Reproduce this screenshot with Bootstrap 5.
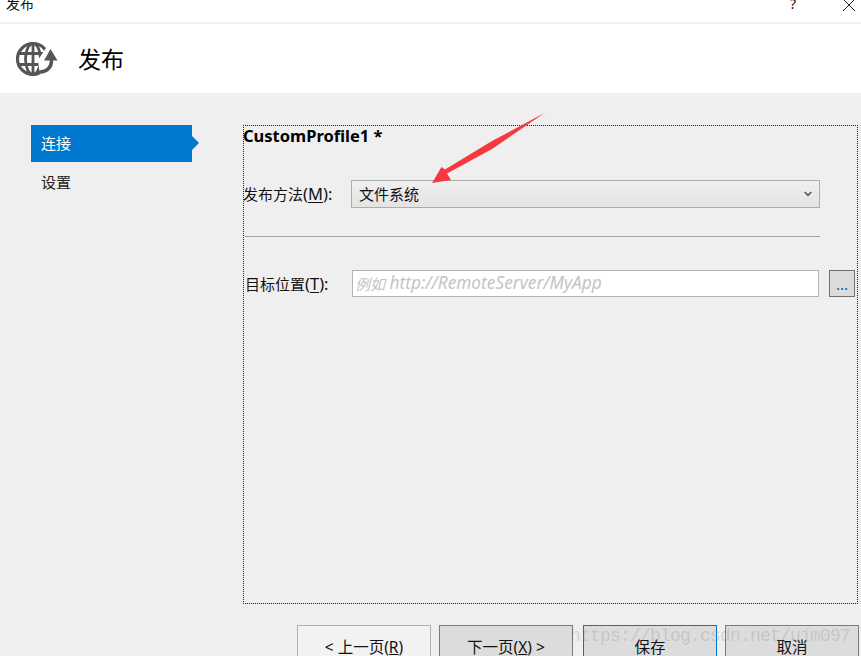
<!DOCTYPE html>
<html lang="zh-CN">
<head>
<meta charset="utf-8">
<title>发布</title>
<link href="https://cdn.jsdelivr.net/npm/bootstrap@5.3.0/dist/css/bootstrap.min.css" rel="stylesheet">
<style>
html,body{margin:0;height:656px;overflow:hidden;background:#efefef}
body{font-family:"Noto Sans","Noto Sans CJK SC",sans-serif;font-size:15px;color:#111;line-height:1.2}
.app-shell{position:relative;width:861px;height:656px;overflow:hidden}
.app-shell>*{flex:none}
.title-strip{height:22px;background:#fff;overflow:hidden}
.title-strip .cap{margin:-6px 0 0 6px;font-size:14px;line-height:20px}
.win-glyphs{padding-right:5px;gap:46px;margin-top:-6px}
.strip-gap{height:2px;background:#efefef}
.head-band{height:69px;background:#fff;padding-left:15px;gap:19px}
.head-band h1{font-size:23px;font-weight:400;margin:0;padding-top:2px;color:#000;line-height:1}
.main-row{padding:32px 4px 0 31px;height:505px}
.side-col{width:161px;flex:none}
.side-item{height:37px;padding:0 0 2px 10px;display:flex;align-items:center;position:relative;color:#222}
.side-item.on{background:#0078ce;color:#fff}
.side-item.on::after{content:"";position:absolute;left:100%;top:11px;border-left:7px solid #0078ce;border-top:7px solid transparent;border-bottom:7px solid transparent}
.side-item+.side-item{margin-top:2px}
.form-frame{margin-left:51px;width:615px;height:479px;border:1px dotted #222;flex:none}
.prof-name{font-weight:700;font-size:16.5px;line-height:20px;color:#000;margin-left:-1px}
.f-row{display:flex;align-items:center}
.f-label{white-space:nowrap}
.f-label u{text-underline-offset:2px}
.lat-part{font-size:16.5px}
.row-method{height:28px;margin:34px 0 0 -1px}
.row-method .f-label{width:108px}
.fake-select{width:469px;height:28px;border:1px solid #adadad;background:linear-gradient(#f0f0f0,#e3e3e3);padding:0 7px;justify-content:space-between;display:flex;align-items:center}
.rule-line{height:1px;background:#a0a0a0;width:575px;margin:28px 0 0 1px}
.row-target{height:27px;margin-top:33px;padding-left:1px}
.row-target .f-label{width:107px}
.fake-input{width:467px;height:27px;border:1px solid #b4b4b4;background:#fff;padding:0 2px;color:#c4c4c4;font-style:italic;font-size:17.3px;display:flex;align-items:center;white-space:pre}
.ph-cjk{font-size:15px}
.dots-btn{width:26px;height:27px;border:1px solid #707070;background:#dcdcdc;margin-left:10px;color:#0a58a8;font-size:15px;line-height:20px;text-align:center;padding:0}
.foot-row{padding:27px 0 0 297px;gap:8px}
.foot-row .act{width:134px;height:40px;background:#dcdcdc;border:1px solid #7b7b7b;padding:4px 0 0;text-align:center;color:#111;font-size:15.5px;line-height:22px;flex:none;border-radius:0;align-self:flex-start;display:block}
.foot-row .act.light{background:#f2f2f2;border-color:#adb2ad}
.foot-row .act.focus-act{border-color:#0078d7;margin-left:2px}
.arrow-over{position:absolute;left:425px;top:108px;width:125px;height:80px}
.stamp{position:absolute;left:570px;top:626px;font-family:"Liberation Mono",monospace;font-size:18px;letter-spacing:-.8px;color:rgba(120,120,110,.24);white-space:nowrap}
</style>
</head>
<body>
<div class="app-shell d-flex flex-column">
  <div class="title-strip d-flex justify-content-between">
    <div class="cap">发布</div>
    <div class="win-glyphs d-flex align-items-start">
      <span style="font-size:14px;line-height:20px">?</span>
      <svg width="14" height="14" viewBox="0 0 14 14" style="margin-top:4px" aria-hidden="true"><path d="M1 1 13 13M13 1 1 13" stroke="#222" stroke-width="1" fill="none"/></svg>
    </div>
  </div>
  <div class="strip-gap"></div>
  <div class="head-band d-flex align-items-center">
    <svg width="44" height="36" viewBox="0 0 44 36" aria-hidden="true">
      <g fill="none" stroke="#555" stroke-width="2.8">
        <circle cx="18" cy="18" r="15.5" stroke-width="3.2"/>
        <ellipse cx="18" cy="18" rx="7.5" ry="15.5"/>
        <path d="M3 12.5H33M3 23.5H33M18 2V34"/>
      </g>
      <path d="M25 36C34 36 42 30 43 20L33 4 23 19Z" fill="#fff"/>
      <path d="M24 31C31 31.5 37 27 36.5 18" fill="none" stroke="#555" stroke-width="3.6"/>
      <path d="M29 19.5 35.5 8 42.5 19.5Z" fill="#555"/>
    </svg>
    <h1>发布</h1>
  </div>
  <div class="main-row d-flex">
    <div class="side-col">
      <div class="side-item on">连接</div>
      <div class="side-item">设置</div>
    </div>
    <div class="form-frame">
      <div class="prof-name">CustomProfile1 *</div>
      <div class="f-row row-method">
        <span class="f-label">发布方法<span class="lat-part">(<u>M</u>):</span></span>
        <div class="fake-select"><span>文件系统</span>
          <svg width="8" height="6" viewBox="0 0 8 6" aria-hidden="true"><path d="M.7 1 4 4.4 7.3 1" stroke="#555" stroke-width="1.6" fill="none"/></svg>
        </div>
      </div>
      <div class="rule-line"></div>
      <div class="f-row row-target">
        <span class="f-label">目标位置<span class="lat-part">(<u>T</u>):</span></span>
        <div class="fake-input"><span class="ph-cjk">例如</span> http://RemoteServer/MyApp</div>
        <button type="button" class="btn dots-btn rounded-0">...</button>
      </div>
    </div>
  </div>
  <div class="foot-row d-flex">
    <button type="button" class="btn act light">&lt; 上一页(<u>R</u>)</button>
    <button type="button" class="btn act">下一页(<u>X</u>) &gt;</button>
    <button type="button" class="btn act focus-act">保存</button>
    <button type="button" class="btn act">取消</button>
  </div>
  <svg class="arrow-over" viewBox="0 0 125 80" aria-hidden="true"><path d="M119.5 5 67 33 20 61.5 16.5 59 7 75 26 72 22 65.5 67 41Z" fill="#f5393e"/></svg>
  <div class="stamp">https://blog.csdn.net/ujm097</div>
</div>
</body>
</html>
